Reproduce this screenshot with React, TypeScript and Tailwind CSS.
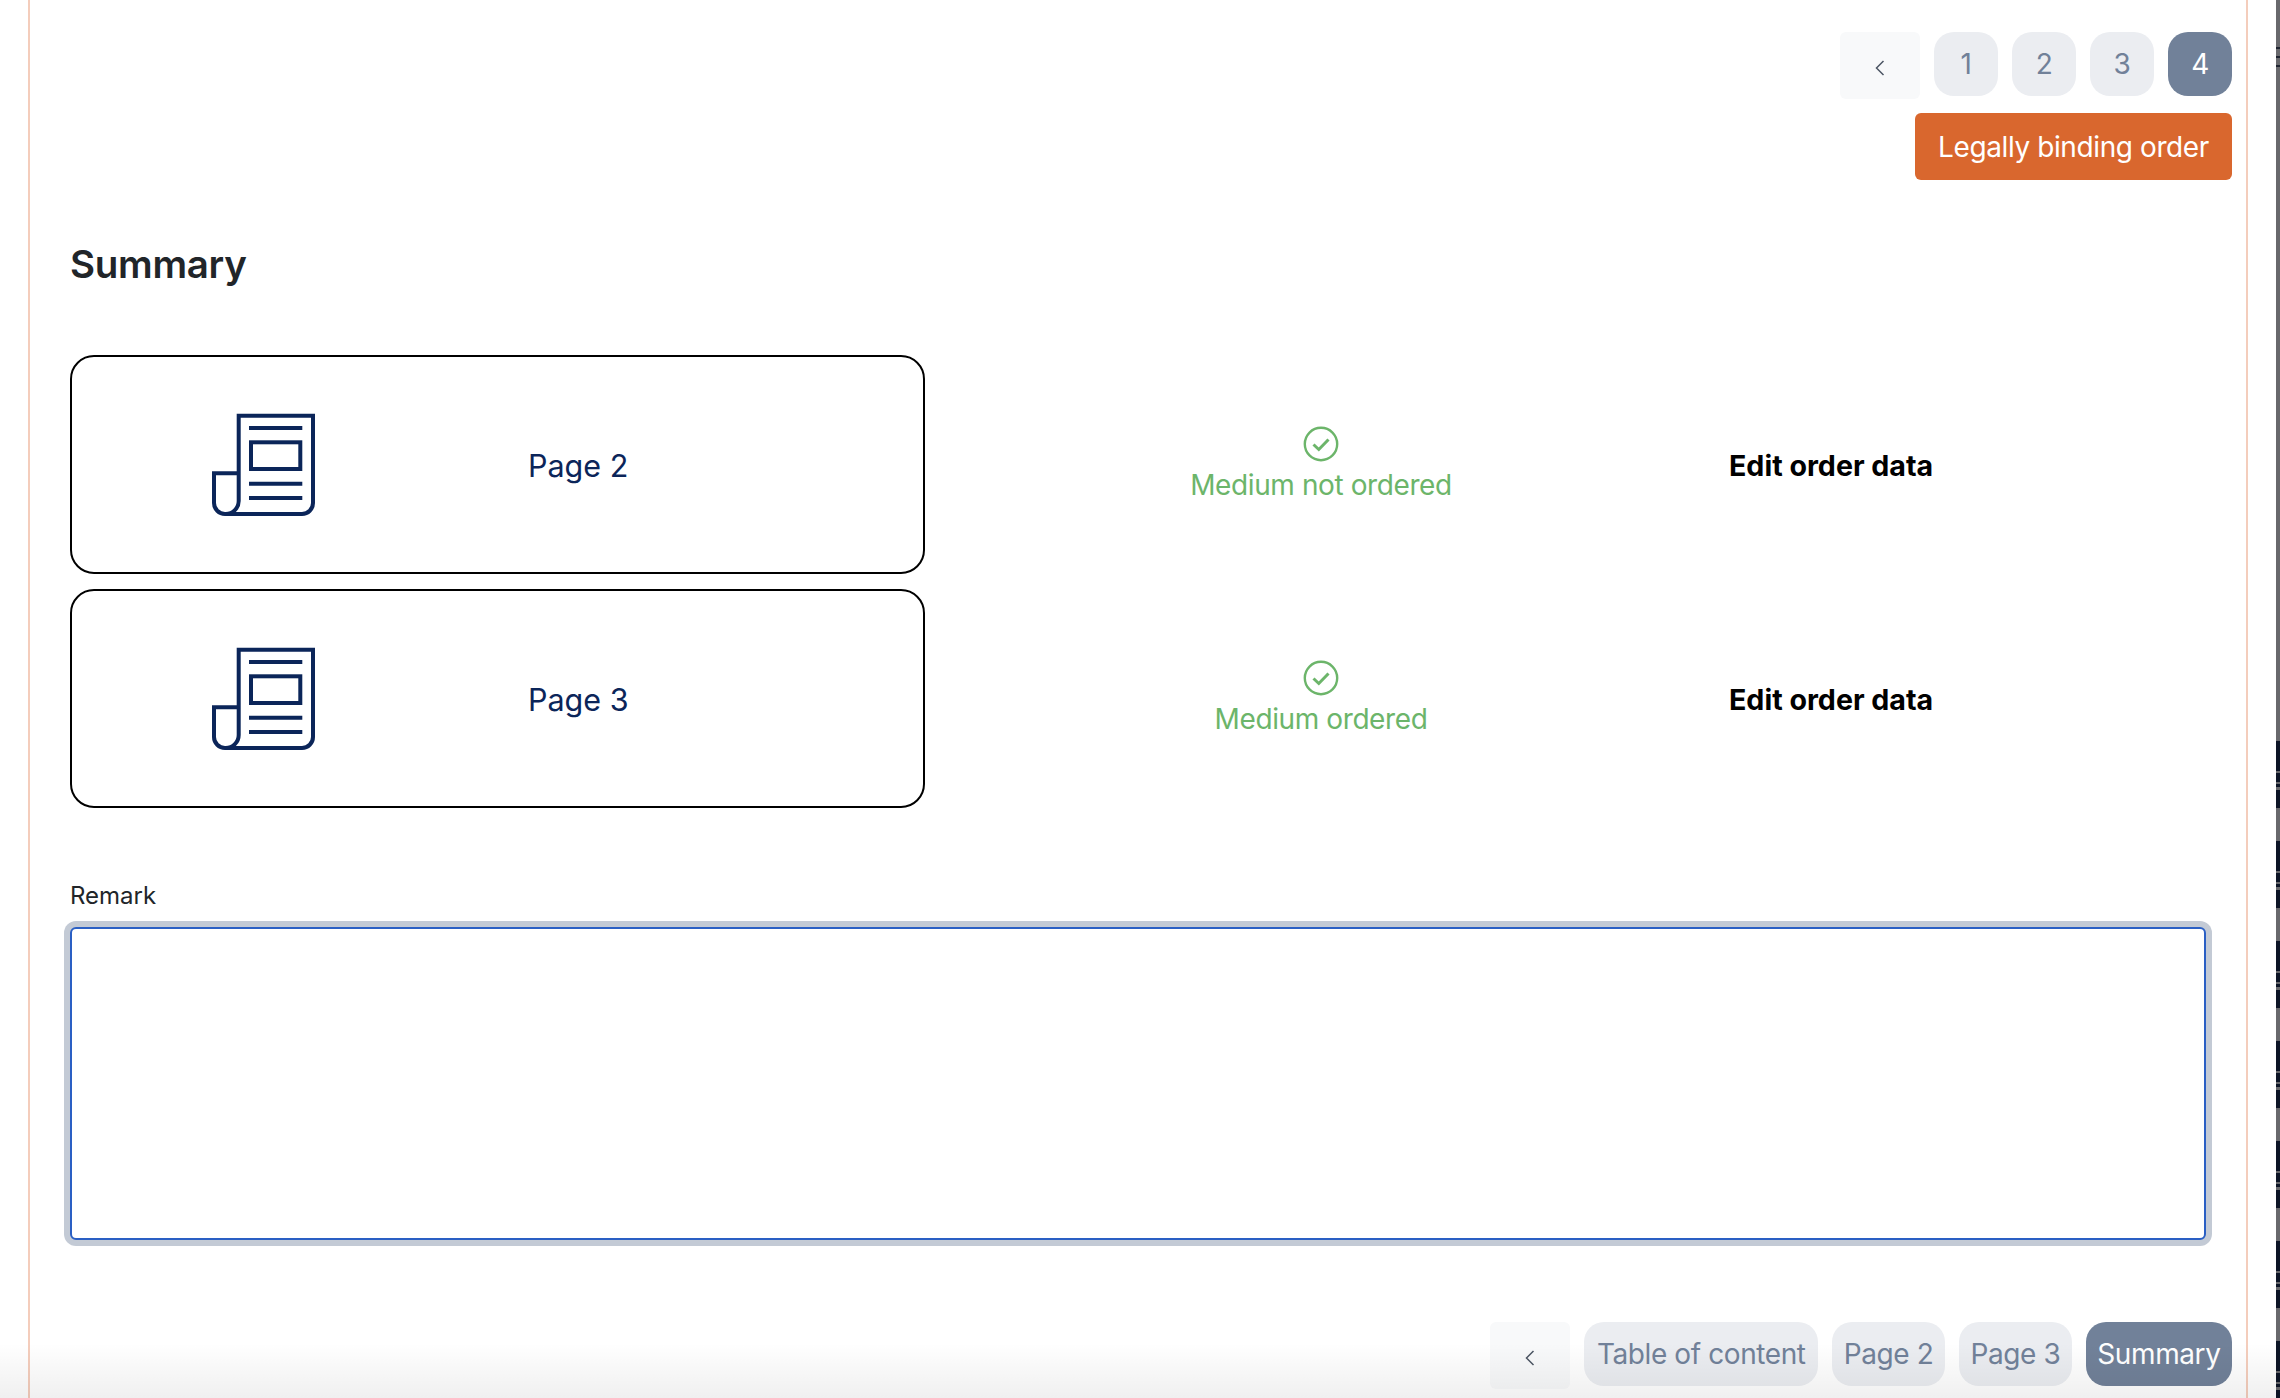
import type { ReactNode } from "react";

const STRIP_SEGMENTS = [0, 1, 2, 3, 4, 5, 6];

function Chevron() {
  return (
    <svg aria-hidden="true" width="12" height="16" viewBox="0 0 12 16" className="mt-[5px]">
      <path d="M9.5 1 L2.5 8 L9.5 15" fill="none" stroke="#4b5563" strokeWidth="1.5" />
    </svg>
  );
}

function BackButton() {
  return (
    <button className="flex h-[67px] w-[80px] items-center justify-center rounded-[6px] bg-[#f8f9fa]">
      <Chevron />
    </button>
  );
}

function PagerItem({ label, active, wide }: { label: string; active?: boolean; wide?: boolean }) {
  return (
    <button
      className={`flex h-[64px] min-w-[64px] items-center justify-center rounded-[20px] text-[28px] tracking-[-0.4px] ${
        wide ? "px-[11.5px]" : "w-[64px]"
      } ${label === "Table of content" ? "w-[234px]" : ""} ${
        active ? "bg-[#718199] text-white" : "bg-[#ebedf1] text-[#718199]"
      }`}
    >
      {label}
    </button>
  );
}

function NewspaperIcon() {
  return (
    <svg aria-hidden="true" width="103" height="103" viewBox="0 0 103 103" fill="none" stroke="#0b2559" strokeWidth="4">
      <path d="M26.7 60.3 V2.7 H101 V90 a11 11 0 0 1 -11 11 H13 a11 11 0 0 1 -11 -11 V60.3 H26.7 V88 a13 13 0 0 1 -13 13" />
      <path d="M37 15 H90.3 M37 70.7 H90.3 M37 85 H90.3" />
      <rect x="39" y="29.3" width="49.3" height="26.7" />
    </svg>
  );
}

function CheckCircle() {
  return (
    <svg aria-hidden="true" width="36" height="36" viewBox="0 0 36 36" fill="none" stroke="#6cb56a">
      <circle cx="18" cy="18" r="16.2" strokeWidth="2.4" />
      <path d="M10.5 18.5 L15.8 23.5 L25.5 13.5" strokeWidth="3" />
    </svg>
  );
}

function OrderRow({ page, status }: { page: string; status: string }) {
  return (
    <div className="flex items-center">
      <div className="flex h-[219px] w-[855px] items-center rounded-[24px] border-2 border-black pl-[140px]">
        <NewspaperIcon />
        <span className="ml-[213px] mt-[3px] text-[30.5px] text-[#0b2559]">{page}</span>
      </div>
      <div className="ml-[130px] flex w-[532px] flex-col items-center pt-[5px] text-[28px] leading-[47px] tracking-[-0.4px] text-[#6cb56a]">
        <CheckCircle />
        <span>{status}</span>
      </div>
      <span className="ml-[142px] mt-[3px] text-[28.6px] font-bold text-black">Edit order data</span>
    </div>
  );
}

function RightStrip(): ReactNode {
  return (
    <div className="flex h-full w-[4px] flex-col overflow-hidden bg-[#0d1526]">
      <div className="flex h-[741px] shrink-0 flex-col bg-[#68686c]">
        <div className="mt-[47px] h-[2px] bg-[#1f2430]" />
        <div className="mt-[7px] h-[2px] bg-[#1f2430]" />
        <div className="mt-[7px] h-[2px] bg-[#1f2430]" />
      </div>
      <div className="flex h-[67px] shrink-0 flex-col">
        <div className="mt-[30px] h-[2px] bg-[#68686c]" />
        <div className="mt-[9px] h-[2px] bg-[#68686c]" />
        <div className="mt-[3px] h-[3px] bg-[#68686c]" />
      </div>
      {STRIP_SEGMENTS.map((i) => (
        <div key={i} className="flex h-[100px] shrink-0 flex-col">
          <div className="h-[33px] bg-[#68686c]" />
          <div className="mt-[30px] h-[2px] bg-[#68686c]" />
          <div className="mt-[9px] h-[2px] bg-[#68686c]" />
          <div className="mt-[3px] h-[3px] bg-[#68686c]" />
        </div>
      ))}
    </div>
  );
}

export default function App() {
  return (
    <div className="relative flex h-[1398px] w-[2280px] overflow-hidden bg-white font-['Inter',sans-serif]">
      <div className="ml-[28px] flex h-full w-[2220px] flex-col border-x-2 border-[#f4cdbc] pl-[40px] pr-[14px] pt-[32px]">
        <div className="flex items-start justify-end gap-[14px]">
          <BackButton />
          <PagerItem label="1" />
          <PagerItem label="2" />
          <PagerItem label="3" />
          <PagerItem label="4" active />
        </div>
        <div className="mt-[14px] flex justify-end">
          <button className="h-[67px] w-[317px] rounded-[6px] bg-[#d9672e] text-[28px] tracking-[-0.4px] text-white">
            Legally binding order
          </button>
        </div>
        <h1 className="mt-[60px] text-[38.5px] font-semibold leading-[48px] tracking-[-0.3px] text-[#212529]">Summary</h1>
        <div className="mt-[67px] flex flex-col gap-[15px]">
          <OrderRow page="Page 2" status="Medium not ordered" />
          <OrderRow page="Page 3" status="Medium ordered" />
        </div>
        <label className="mt-[73px] block text-[24px] leading-[30px] text-[#212529]">Remark</label>
        <textarea className="mt-[16px] h-[313px] w-[2136px] resize-none rounded-[6px] border-2 border-[#2a5fc4] bg-white shadow-[0_0_0_6px_#c3cad5] outline-none" />
        <div className="mt-[82px] flex items-start justify-end gap-[14px]">
          <BackButton />
          <PagerItem label="Table of content" wide />
          <PagerItem label="Page 2" wide />
          <PagerItem label="Page 3" wide />
          <PagerItem label="Summary" active wide />
        </div>
      </div>
      <div className="ml-[28px]">
        <RightStrip />
      </div>
      <div className="pointer-events-none absolute inset-x-0 bottom-0 h-[55px] bg-gradient-to-b from-transparent to-black/[0.06]" />
    </div>
  );
}
